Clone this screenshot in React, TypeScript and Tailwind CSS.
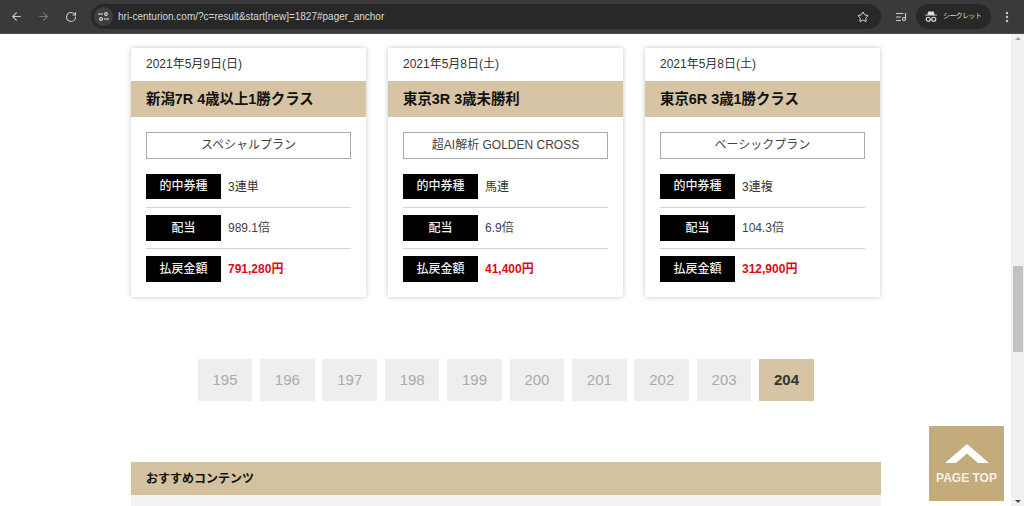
import { ArrowLeft, ArrowRight, RotateCw, Star, EllipsisVertical, ListMusic } from "lucide-react";

const cards = [
  { date: "2021年5月9日(日)", title: "新潟7R 4歳以上1勝クラス", plan: "スペシャルプラン", type: "3連単", odds: "989.1倍", pay: "791,280円" },
  { date: "2021年5月8日(土)", title: "東京3R 3歳未勝利", plan: "超AI解析 GOLDEN CROSS", type: "馬連", odds: "6.9倍", pay: "41,400円" },
  { date: "2021年5月8日(土)", title: "東京6R 3歳1勝クラス", plan: "ベーシックプラン", type: "3連複", odds: "104.3倍", pay: "312,900円" },
];

const pages = [195, 196, 197, 198, 199, 200, 201, 202, 203, 204];

function ResultCard({ card }: { card: (typeof cards)[number] }) {
  return (
    <div className="w-[235px] h-[249px] bg-white shadow-[0_0_5px_rgba(0,0,0,0.22)]">
      <div className="h-[33px] pl-[15px] pt-[7px] text-[12px] leading-[19px] text-[#333]">{card.date}</div>
      <div className="h-[36px] pl-[15px] bg-[#d6c4a4] text-[14.4px] leading-[36px] font-bold text-[#111]">{card.title}</div>
      <div className="px-[15px] pt-[15px]">
        <div className="h-[27px] border border-[#aaa] text-center text-[12px] leading-[24px] text-[#444]">{card.plan}</div>
        <div className="mt-[15px] flex items-center pb-[8px] border-b border-[#d4d4d4]">
          <div className="w-[75px] h-[25px] bg-black text-[#eee] text-center text-[12px] font-medium leading-[25px]">的中券種</div>
          <div className="ml-[7px] text-[12px] text-[#333]">{card.type}</div>
        </div>
        <div className="mt-[7px] flex items-center pb-[7px] border-b border-[#d4d4d4]">
          <div className="w-[75px] h-[26px] bg-black text-[#eee] text-center text-[12px] font-medium leading-[26px]">配当</div>
          <div className="ml-[7px] text-[12px] text-[#444]">{card.odds}</div>
        </div>
        <div className="mt-[7px] flex items-center">
          <div className="w-[75px] h-[26px] bg-black text-[#eee] text-center text-[12px] font-medium leading-[26px]">払戻金額</div>
          <div className="ml-[7px] text-[12px] font-bold text-[#dd0a14]">{card.pay}</div>
        </div>
      </div>
    </div>
  );
}

function BrowserBar() {
  return (
    <div className="h-[34px] bg-[#3a3a3a] flex items-center text-[#c7c7c7] border-b border-[#4a4a4a]">
      <ArrowLeft className="ml-[10px] w-[13px] h-[13px]" strokeWidth={2} />
      <ArrowRight className="ml-[14px] w-[13px] h-[13px] text-[#777]" strokeWidth={2} />
      <RotateCw className="ml-[15px] w-[12px] h-[12px]" strokeWidth={2.2} />
      <div className="ml-[14px] w-[790px] h-[25px] rounded-full bg-[#282828] flex items-center">
        <div className="ml-[3px] w-[19px] h-[19px] rounded-full bg-[#3f3f3f] flex items-center justify-center">
          <svg width="11" height="9" viewBox="0 0 11 9" fill="none" stroke="#ccc" strokeWidth="1.2">
            <path d="M0 2h5" />
            <circle cx="8" cy="2" r="1.4" />
            <circle cx="3" cy="7" r="1.4" />
            <path d="M6 7h5" />
          </svg>
        </div>
        <span className="ml-[5px] text-[10px] text-[#d8d8d8]">hri-centurion.com/?c=result&amp;start[new]=1827#pager_anchor</span>
        <Star className="ml-auto mr-[12px] w-[12px] h-[12px] text-[#ddd]" strokeWidth={2} />
      </div>
      <ListMusic className="ml-[14px] w-[12px] h-[12px] text-[#ccc]" strokeWidth={2.2} />
      <div className="ml-[9px] w-[75px] h-[25px] rounded-full bg-[#282828] flex items-center pl-[9px] gap-[6px]">
        <svg width="12" height="11" viewBox="0 0 13 12" fill="#ddd">
          <path d="M3.5 0.5h6l1 3.5H13v1H0V4h2.5z" />
          <circle cx="3.5" cy="9" r="2.2" fill="none" stroke="#ddd" strokeWidth="1.3" />
          <circle cx="9.5" cy="9" r="2.2" fill="none" stroke="#ddd" strokeWidth="1.3" />
        </svg>
        <span className="text-[7px] tracking-[-0.6px] text-[#ddd]">シークレット</span>
      </div>
      <EllipsisVertical className="ml-[9px] w-[14px] h-[14px]" strokeWidth={2.2} />
    </div>
  );
}

export default function App() {
  return (
    <div className="relative w-[1024px] h-[506px] overflow-hidden bg-white font-['Liberation_Sans','Noto_Sans_CJK_JP',sans-serif]">
      <BrowserBar />
      <div className="flex h-[472px]">
        <main className="w-[1011px] overflow-hidden">
          <div className="pt-[14px] pl-[131px] flex gap-[22px]">
            {cards.map((c) => (
              <ResultCard key={c.title} card={c} />
            ))}
          </div>
          <div className="mt-[62px] flex gap-[7.8px] pl-[197.7px]">
            {pages.map((p) => (
              <div
                key={p}
                className={
                  p === 204
                    ? "w-[54.6px] h-[42px] bg-[#d6c4a4] text-[#333] font-bold text-[15px] leading-[42px] text-center"
                    : "w-[54.6px] h-[42px] bg-[#eeeeee] text-[#aaa] text-[15px] leading-[42px] text-center"
                }
              >
                {p}
              </div>
            ))}
          </div>
          <div className="mt-[61px] ml-[131px] w-[750px]">
            <div className="h-[33px] bg-[#d3c1a0] pl-[15px] text-[12px] font-bold leading-[35px] text-[#111]">おすすめコンテンツ</div>
            <div className="h-[20px] bg-[#f3f3f3]" />
          </div>
        </main>
        <div className="relative w-[13px] bg-[#f1f1f1]">
          <div className="absolute top-[232px] left-[2px] w-[10px] h-[86px] bg-[#c1c1c1]" />
          <div className="absolute bottom-[3px] left-[3.5px] w-0 h-0 border-x-[3px] border-x-transparent border-t-[3px] border-t-[#505050]" />
          <div className="absolute top-[3px] left-[3.5px] w-0 h-0 border-x-[3px] border-x-transparent border-b-[3px] border-b-[#a3a3a3]" />
        </div>
      </div>
      <div className="absolute left-[929px] top-[426px] w-[75px] h-[75px] bg-[#c3ab7c] flex flex-col items-center">
        <svg className="mt-[18px]" width="44" height="19" viewBox="0 0 44 19" fill="#fff">
          <path d="M22 0L44 19H33L22 9.5L11 19H0z" />
        </svg>
        <span className="mt-[7px] text-[12px] font-bold leading-[16px] text-[#f5f0e6]">PAGE TOP</span>
      </div>
    </div>
  );
}
